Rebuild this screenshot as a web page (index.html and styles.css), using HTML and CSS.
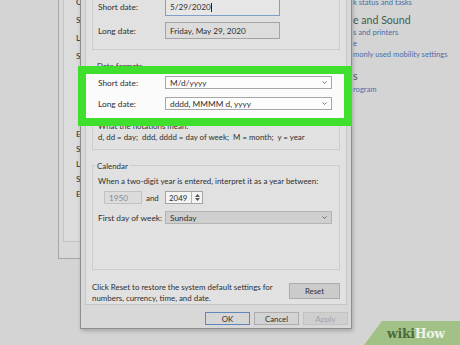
FILE: index.html
```html
<!DOCTYPE html>
<html>
<head>
<meta charset="utf-8">
<link rel="stylesheet" href="styles.css">
</head>
<body>
<div class="cp">
  <div class="cp-link first">k status and tasks</div>
  <div class="cp-head">e and Sound</div>
  <div class="cp-link">s and printers</div>
  <div class="cp-link">e</div>
  <div class="cp-link">monly used mobility settings</div>
  <div class="cp-head second">s</div>
  <div class="cp-link last">rogram</div>
</div>

<div class="back">
  <div class="back-page">
    <div class="back-top">
      <div class="bl">C</div>
      <div class="bl">S</div>
      <div class="bl">L</div>
      <div class="bl">S</div>
    </div>
    <div class="back-bottom">
      <div class="bl2">E</div>
      <div class="bl2">S</div>
      <div class="bl2">L</div>
      <div class="bl2">S</div>
      <div class="bl2">E</div>
    </div>
  </div>
</div>

<div class="dlg">
  <div class="page">
    <div class="group examples">
      <div class="row r1"><span class="lbl">Short date:</span><span class="field focus">5/29/2020<span class="caret"></span></span></div>
      <div class="row r2"><span class="lbl">Long date:</span><span class="field ro">Friday, May 29, 2020</span></div>
    </div>

    <div class="group formats">
      <div class="gtitle">Date formats</div>
      <div class="hl">
        <div class="row"><span class="lbl">Short date:</span><span class="combo"><span>M/d/yyyy</span><svg class="chev" width="5" height="3" viewBox="0 0 5 3"><polyline points="0.5,0.5 2.5,2.5 4.5,0.5"/></svg></span></div>
        <div class="row gap"><span class="lbl">Long date:</span><span class="combo"><span>dddd, MMMM d, yyyy</span><svg class="chev" width="5" height="3" viewBox="0 0 5 3"><polyline points="0.5,0.5 2.5,2.5 4.5,0.5"/></svg></span></div>
      </div>
      <div class="note n1">What the notations mean:</div>
      <div class="note n2">d, dd = day;  ddd, dddd = day of week;  M = month;  y = year</div>
    </div>

    <div class="group cal">
      <div class="gtitle">Calendar</div>
      <div class="cal-text">When a two-digit year is entered, interpret it as a year between:</div>
      <div class="row years">
        <span class="field dis">1950</span>
        <span class="and">and</span>
        <span class="spin"><span class="spin-val">2049</span><span class="spin-btns"><svg width="5" height="3" viewBox="0 0 5 3"><polygon points="0,3 2.5,0 5,3"/></svg><svg width="5" height="3" viewBox="0 0 5 3"><polygon points="0,0 5,0 2.5,3"/></svg></span></span>
      </div>
      <div class="row week"><span class="lbl">First day of week:</span><span class="combo gray"><span>Sunday</span><svg class="chev" width="5" height="3" viewBox="0 0 5 3"><polyline points="0.5,0.5 2.5,2.5 4.5,0.5"/></svg></span></div>
    </div>

    <div class="reset-row">
      <div class="reset-text">Click Reset to restore the system default settings for<br>numbers, currency, time, and date.</div>
      <span class="btn reset">Reset</span>
    </div>
  </div>
  <div class="btns">
    <span class="btn def">OK</span>
    <span class="btn">Cancel</span>
    <span class="btn dis">Apply</span>
  </div>
</div>

<div class="logo"><span class="wiki">wiki</span><span class="how">How</span></div>
</body>
</html>
```

FILE: styles.css
```css
* { box-sizing: border-box; }
html, body { margin: 0; padding: 0; }
body {
  width: 460px;
  height: 345px;
  overflow: hidden;
  position: relative;
  background: #d4d4d4;
  font-family: "Lato", "Open Sans", sans-serif;
  font-size: 7.9px;
  color: #2f2f2f;
}

/* control panel behind */
.cp { position: absolute; left: 353px; top: -3px; white-space: nowrap; }
.cp-link { font-size: 7.6px; line-height: 11px; color: #4a6fa8; }
.cp-head { font-size: 10.6px; line-height: 14px; color: #3f5d4e; margin-top: 5px; }
.cp-head.second { margin-top: 9px; }
.cp-link.last { margin-top: 1px; }

/* back window */
.back {
  position: absolute; left: 58px; top: -10px;
  width: 290px; height: 269px;
  background: #d8d8d8;
  border: 1px solid #a6a6a6;
  padding: 0 4px 16px 4px;
}
.back-page {
  height: 100%;
  border: 1px solid #c4c4c4;
  background: #dcdcdc;
  padding-left: 12px;
  white-space: nowrap;
  font-size: 8.4px;
}
.back-top { padding-top: 1px; }
.bl { height: 18px; line-height: 18px; }
.back-bottom { margin-top: 62px; }
.bl2 { height: 15px; line-height: 15px; }

/* main dialog */
.dlg {
  position: absolute; left: 80px; top: -40px;
  width: 272px; height: 369px;
  background: #d8d8d8;
  border: 1px solid #8f8f8f;
  box-shadow: 1px 2px 4px rgba(0,0,0,0.22);
  padding: 19px 4px 0 4px;
  display: flex; flex-direction: column;
}
.page {
  border: 1px solid #c6c6c6;
  background: #e1e1e1;
  padding: 7px 0 0 0;
}
.group {
  margin: 0 6px;
  border: 1px solid #cdcdcd;
  padding: 0 5px;
}
.row { display: flex; align-items: center; white-space: nowrap; }
.lbl { width: 67px; flex: none; font-size: 8.3px; }

.examples { padding-top: 9px; padding-bottom: 10px; }
.examples .r1 { height: 18px; }
.examples .r2 { height: 17px; margin-top: 6px; }
.field {
  height: 100%;
  display: flex; align-items: center;
  padding: 0 4px;
  border: 1px solid #a3a3a3;
  background: #dedede;
  font-size: 8.2px;
}
.examples .field { width: 115px; }
.field.focus { border-color: #7f9fcb; background: #e6e6e6; }
.field.ro { background: #dcdcdc; }
.caret { width: 1px; height: 9px; background: #222; margin-left: 0.5px; }

.gtitle {
  width: fit-content;
  height: 10px; line-height: 10px;
  padding: 0 2px;
  margin-left: -3px;
  background: #e1e1e1;
  position: relative;
}
.formats { margin-top: 16px; padding-bottom: 7px; }
.formats .gtitle { margin-top: -6px; }
.hl {
  position: relative;
  z-index: 1;
  margin: -5px -18px 0 -20px;
  border: 8px solid #3fe02d;
  background: #fbfbfb;
  padding: 2px 12px 8px 12px;
}
.hl .row { height: 13px; }
.hl .row.gap { margin-top: 8px; }
.combo {
  width: 167px; height: 13px;
  display: flex; align-items: center; justify-content: space-between;
  padding: 0 4px 0 4px;
  border: 1px solid #a7a7a7;
  background: #fdfdfd;
  font-size: 8.3px;
}
.combo.gray { background: #cfcfcf; border-color: #b4b4b4; }
.chev polyline { fill: none; stroke: #555; stroke-width: 0.8; }
.note { line-height: 10px; white-space: pre; }
.note.n1 { margin-top: -5px; }
.note.n2 { margin-top: 1px; }

.cal { margin-top: 15px; padding-bottom: 45px; }
.cal .gtitle { margin-top: -5px; }
.cal-text { margin-top: 5px; line-height: 10px; white-space: nowrap; }
.years { height: 13px; margin-top: 5px; }
.field.dis {
  width: 38px; margin-left: 6px;
  color: #8a8a8a; background: #dcdcdc; border-color: #c2c2c2;
}
.and { margin-left: 4px; width: 19px; }
.spin {
  width: 38px; height: 13px;
  display: flex;
  border: 1px solid #a3a3a3;
  background: #f4f4f4;
}
.spin-val { flex: 1; padding-left: 3px; display: flex; align-items: center; }
.spin-btns {
  width: 11px;
  border-left: 1px solid #b5b5b5;
  display: flex; flex-direction: column; align-items: center; justify-content: space-around;
  padding: 1px 0;
}
.spin-btns polygon { fill: #555; }
.week { height: 13px; margin-top: 7px; }

.reset-row {
  margin: 12px 6px 0 6px;
  display: flex; align-items: flex-start;
}
.reset-text { line-height: 11px; white-space: nowrap; }
.btn {
  display: flex; align-items: center; justify-content: center;
  border: 1px solid #adadad;
  background: #d3d3d3;
  font-size: 7.8px;
}
.reset { width: 51px; height: 16px; margin-left: auto; margin-top: 1px; background: #cbcbcb; }
.btns {
  margin-top: 7px;
  margin-right: -1px;
  display: flex; justify-content: flex-end; gap: 4px;
}
.btns .btn { width: 45px; height: 13px; }
.btn.def { border-color: #5f86bd; background: #d6d6d6; }
.btn.dis { color: #a3a3a3; border-color: #c3c3c3; background: #cfcfcf; }

/* wikiHow logo */
.logo {
  position: absolute; left: 364px; top: 321px;
  width: 96px; height: 24px;
  background: #a2c186;
  clip-path: polygon(18px 0, 100% 0, 100% 100%, 0 100%);
  padding-left: 23px;
  display: flex; align-items: center;
  font-family: "DejaVu Serif", "Liberation Serif", serif;
  font-weight: bold;
  font-size: 12.5px;
  letter-spacing: -0.3px;
}
.wiki { color: #4d6a3b; }
.how { color: #eef4e8; }
```
